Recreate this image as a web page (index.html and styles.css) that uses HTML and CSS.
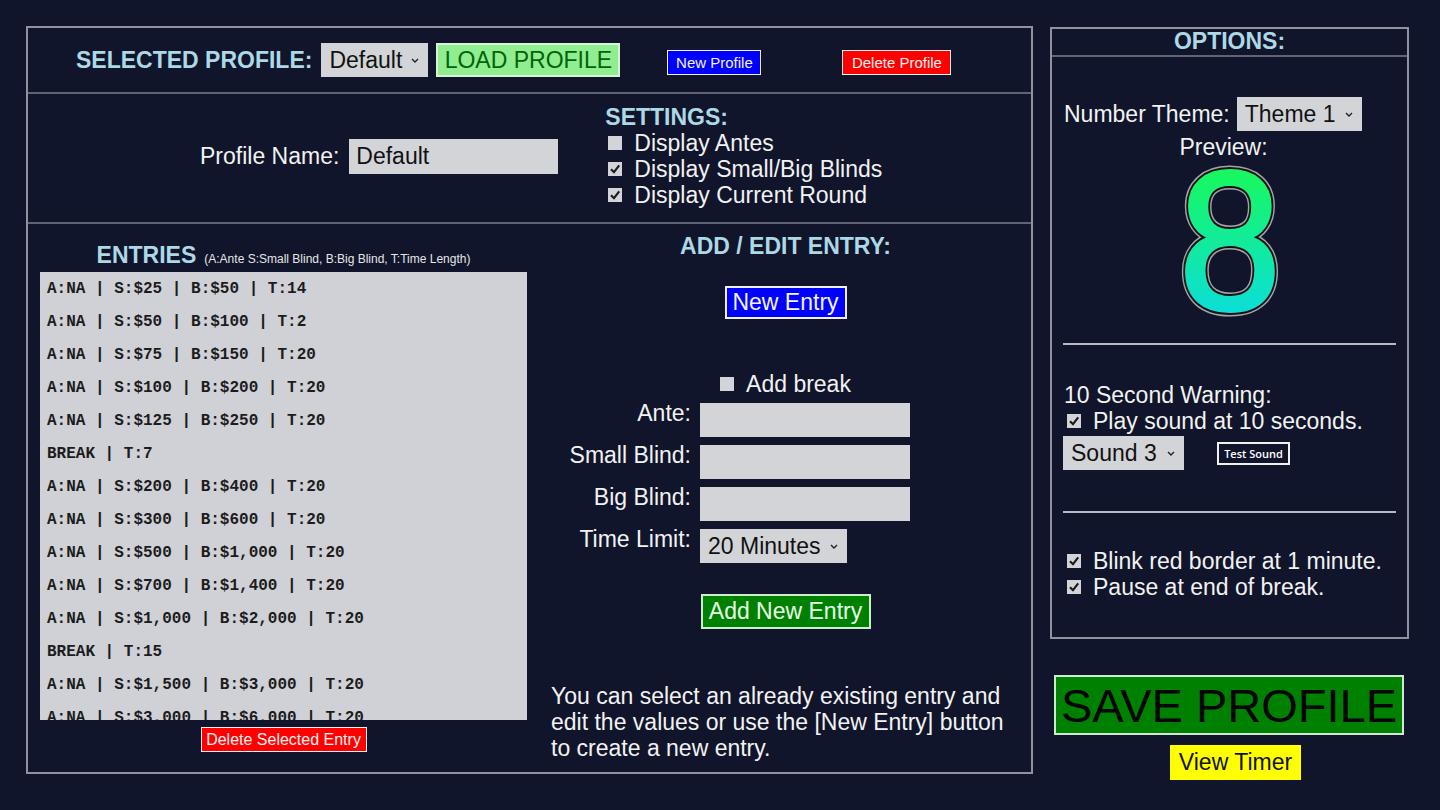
FILE: index.html
```html
<!DOCTYPE html>
<html lang="en">
<head>
    <meta charset="UTF-8">
    <meta name="viewport" content="width=device-width, initial-scale=1.0">
    <title>Blind Timer - Profile Editor</title>
    <link rel="stylesheet" href="styles.css">
</head>
<body>
    <div class="app">
        <main class="editor">
            <!-- profile picker -->
            <section class="profile-bar">
                <span class="heading">SELECTED PROFILE:</span>
                <div class="select select-profile">
                    <select><option>Default</option></select>
                    <svg class="chevron" width="8" height="5" viewBox="0 0 8 5"><path d="M1 1 L4 4 L7 1" /></svg>
                </div>
                <button class="btn btn-load">LOAD PROFILE</button>
                <button class="btn btn-small btn-blue btn-new-profile">New Profile</button>
                <button class="btn btn-small btn-red btn-delete-profile">Delete Profile</button>
            </section>

            <!-- name + display settings -->
            <section class="profile-settings">
                <div class="name-group">
                    <label for="profile-name">Profile Name:</label>
                    <input type="text" id="profile-name" class="field field-name" value="Default">
                </div>
                <div class="settings">
                    <div class="heading">SETTINGS:</div>
                    <label class="check-row"><span class="box"></span>Display Antes</label>
                    <label class="check-row"><span class="box"><svg viewBox="0 0 14 14"><path d="M3 7.2 L6 10.2 L11.2 3.4" /></svg></span>Display Small/Big Blinds</label>
                    <label class="check-row"><span class="box"><svg viewBox="0 0 14 14"><path d="M3 7.2 L6 10.2 L11.2 3.4" /></svg></span>Display Current Round</label>
                </div>
            </section>

            <section class="entries-area">
                <div class="entries">
                    <div class="entries-title">
                        <span class="heading">ENTRIES</span>
                        <span class="legend">(A:Ante S:Small Blind, B:Big Blind, T:Time Length)</span>
                    </div>
                    <ul class="entry-list">
                        <li>A:NA | S:$25 | B:$50 | T:14</li>
                        <li>A:NA | S:$50 | B:$100 | T:2</li>
                        <li>A:NA | S:$75 | B:$150 | T:20</li>
                        <li>A:NA | S:$100 | B:$200 | T:20</li>
                        <li>A:NA | S:$125 | B:$250 | T:20</li>
                        <li>BREAK | T:7</li>
                        <li>A:NA | S:$200 | B:$400 | T:20</li>
                        <li>A:NA | S:$300 | B:$600 | T:20</li>
                        <li>A:NA | S:$500 | B:$1,000 | T:20</li>
                        <li>A:NA | S:$700 | B:$1,400 | T:20</li>
                        <li>A:NA | S:$1,000 | B:$2,000 | T:20</li>
                        <li>BREAK | T:15</li>
                        <li>A:NA | S:$1,500 | B:$3,000 | T:20</li>
                        <li>A:NA | S:$3,000 | B:$6,000 | T:20</li>
                    </ul>
                    <button class="btn btn-small btn-red btn-delete-entry">Delete Selected Entry</button>
                </div>

                <div class="entry-form">
                    <div class="heading">ADD / EDIT ENTRY:</div>
                    <button class="btn btn-blue btn-new-entry">New Entry</button>
                    <label class="check-row break-row"><span class="box"></span>Add break</label>
                    <div class="form-grid">
                        <label for="ante">Ante:</label>
                        <input type="text" id="ante" class="field">
                        <label for="small-blind">Small Blind:</label>
                        <input type="text" id="small-blind" class="field">
                        <label for="big-blind">Big Blind:</label>
                        <input type="text" id="big-blind" class="field">
                        <label>Time Limit:</label>
                        <div class="select select-time">
                            <select><option>20 Minutes</option></select>
                            <svg class="chevron" width="8" height="5" viewBox="0 0 8 5"><path d="M1 1 L4 4 L7 1" /></svg>
                        </div>
                    </div>
                    <button class="btn btn-add-entry">Add New Entry</button>
                    <p class="hint">You can select an already existing entry and edit the values or use the [New Entry] button to create a new entry.</p>
                </div>
            </section>
        </main>

        <aside class="side">
            <div class="options">
                <div class="options-head heading">OPTIONS:</div>
                <div class="options-body">
                    <div class="theme-row">
                        <span>Number Theme:</span>
                        <div class="select select-theme">
                            <select><option>Theme 1</option></select>
                            <svg class="chevron" width="8" height="5" viewBox="0 0 8 5"><path d="M1 1 L4 4 L7 1" /></svg>
                        </div>
                    </div>
                    <div class="preview-label">Preview:</div>
                    <!-- digit preview: one glyph drawn three times for ring, edge and gradient face -->
                    <svg class="preview-digit" width="120" height="160" viewBox="0 0 120 160">
                        <defs>
                            <linearGradient id="digit-fill" x1="0" y1="0" x2="0" y2="1">
                                <stop offset="0" stop-color="#1cff3c" />
                                <stop offset="1" stop-color="#08d8f8" />
                            </linearGradient>
                            <text id="digit-glyph" class="digit" x="0" y="148.5">8</text>
                        </defs>
                        <g transform="translate(60 0) scale(0.93 1)">
                            <use href="#digit-glyph" class="digit-ring" />
                            <use href="#digit-glyph" class="digit-edge" />
                            <use href="#digit-glyph" class="digit-face" />
                        </g>
                    </svg>
                    <hr class="rule">
                    <div class="warning">
                        <div>10 Second Warning:</div>
                        <label class="check-row"><span class="box"><svg viewBox="0 0 14 14"><path d="M3 7.2 L6 10.2 L11.2 3.4" /></svg></span>Play sound at 10 seconds.</label>
                        <div class="sound-row">
                            <div class="select select-sound">
                                <select><option>Sound 3</option></select>
                                <svg class="chevron" width="8" height="5" viewBox="0 0 8 5"><path d="M1 1 L4 4 L7 1" /></svg>
                            </div>
                            <button class="btn btn-test">Test Sound</button>
                        </div>
                    </div>
                    <hr class="rule rule-second">
                    <div class="extras">
                        <label class="check-row"><span class="box"><svg viewBox="0 0 14 14"><path d="M3 7.2 L6 10.2 L11.2 3.4" /></svg></span>Blink red border at 1 minute.</label>
                        <label class="check-row"><span class="box"><svg viewBox="0 0 14 14"><path d="M3 7.2 L6 10.2 L11.2 3.4" /></svg></span>Pause at end of break.</label>
                    </div>
                </div>
            </div>
            <button class="btn btn-save">SAVE PROFILE</button>
            <button class="btn btn-timer">View Timer</button>
        </aside>
    </div>
</body>
</html>
```

FILE: styles.css
```css
body {
    font-family: "Liberation Sans", Arial, sans-serif;
    font-size: 23px;
    background-color: #10152b;
    color: #f2f2f2;
    margin: 0;
    padding: 0;
    width: 1440px;
    height: 810px;
    overflow: hidden;
}
.app {
    display: flex;
    align-items: flex-start;
    gap: 17px;
    padding: 26px 0 0 26px;
}
.heading {
    font-weight: bold;
    color: #add8e6;
    line-height: 26px;
}

/* form controls */
.btn {
    font-family: "Liberation Sans", Arial, sans-serif;
    font-size: 23px;
    border: 2px solid #f0f0f0;
    padding: 0;
    cursor: pointer;
    box-sizing: border-box;
    line-height: 1;
}
.btn-small {
    font-size: 15px;
    height: 25px;
    border-width: 1.5px;
}
.btn-blue {
    background-color: #0000ff;
    color: #f4f4ff;
}
.btn-red {
    background-color: #ff0000;
    color: #fff4f4;
}
.field {
    background-color: #d3d4d8;
    border: none;
    height: 34px;
    font-family: "Liberation Sans", Arial, sans-serif;
    font-size: 23px;
    color: #111;
    padding: 0 7px;
    box-sizing: border-box;
}
.select {
    display: inline-flex;
    align-items: center;
    background-color: #d3d4d8;
    height: 34px;
    box-sizing: border-box;
    padding-right: 9px;
}
.select select {
    appearance: none;
    -webkit-appearance: none;
    background: transparent;
    border: none;
    font-family: "Liberation Sans", Arial, sans-serif;
    font-size: 23px;
    color: #111;
    padding: 0 0 0 8px;
    flex: 1;
    min-width: 0;
    height: 100%;
}
.chevron {
    fill: none;
    stroke: #222;
    stroke-width: 1.4;
    flex: none;
}
.check-row {
    display: flex;
    align-items: center;
    line-height: 26px;
    padding-left: 3px;
}
.box {
    width: 14px;
    height: 14px;
    background-color: #d3d4d8;
    margin-right: 12px;
    flex: none;
    display: flex;
}
.box svg {
    width: 14px;
    height: 14px;
    fill: none;
    stroke: #1c1c1c;
    stroke-width: 2.2;
}

/* left editor panel */
.editor {
    width: 1007px;
    height: 748px;
    border: 2px solid #8f939f;
    box-sizing: border-box;
    display: flex;
    flex-direction: column;
}
.profile-bar {
    height: 64px;
    display: flex;
    align-items: center;
    padding-left: 48px;
    border-bottom: 2px solid #5f6474;
    flex: none;
}
.select-profile {
    width: 107px;
    margin-left: 9px;
}
.btn-load {
    margin-left: 8px;
    width: 184px;
    height: 34px;
    background-color: #90ee90;
    color: #00640a;
    border-color: #d6f3d6;
}
.btn-new-profile {
    margin-left: 47px;
    margin-top: 5px;
    width: 94px;
}
.btn-delete-profile {
    margin-left: 81px;
    margin-top: 5px;
    width: 109px;
}
.profile-settings {
    height: 128px;
    display: flex;
    align-items: flex-start;
    padding-left: 172px;
    border-bottom: 2px solid #5f6474;
    flex: none;
}
.name-group {
    display: flex;
    align-items: center;
    gap: 10px;
    margin-top: 45px;
}
.field-name {
    width: 209px;
    height: 35px;
}
.settings {
    margin-left: 47px;
    margin-top: 10px;
}

/* entries list + entry form */
.entries-area {
    flex: 1;
    display: flex;
}
.entries {
    width: 512px;
    padding: 18px 13px 0 12px;
    box-sizing: border-box;
    display: flex;
    flex-direction: column;
}
.entries-title {
    display: flex;
    align-items: baseline;
    justify-content: center;
    gap: 8px;
    margin-bottom: 4px;
}
.legend {
    font-size: 12px;
    color: #e6e6e6;
}
.entry-list {
    list-style: none;
    margin: 0;
    padding: 0;
    height: 448px;
    overflow: hidden;
    background-color: #cfd1d7;
}
.entry-list li {
    font-family: "Liberation Mono", "Courier New", monospace;
    font-weight: bold;
    font-size: 16px;
    line-height: 33px;
    padding: 1px 0 0 7px;
    height: 33px;
    box-sizing: border-box;
    color: #1c1c1c;
}
.btn-delete-entry {
    align-self: center;
    margin-top: 7px;
    width: 166px;
    font-size: 16px;
}
.entry-form {
    flex: 1;
    display: flex;
    flex-direction: column;
    align-items: center;
    padding-top: 9px;
}
.btn-new-entry {
    margin-top: 27px;
    width: 122px;
    height: 33px;
}
.break-row {
    margin-top: 52px;
    padding-left: 0;
}
.form-grid {
    align-self: stretch;
    display: grid;
    grid-template-columns: 151px 210px;
    column-gap: 9px;
    row-gap: 8px;
    margin-top: 6px;
}
.form-grid label {
    text-align: right;
    line-height: 20px;
}
.form-grid .field {
    width: 210px;
}
.select-time {
    width: 147px;
}
.btn-add-entry {
    margin-top: 31px;
    width: 170px;
    height: 35px;
    background-color: #008000;
    color: #e8ffe8;
    border-color: #cdeecd;
}
.hint {
    align-self: flex-start;
    width: 465px;
    margin: 54px 0 0 11px;
    line-height: 26px;
}

/* right options column */
.side {
    width: 359px;
    display: flex;
    flex-direction: column;
    align-items: flex-start;
    margin-top: 1px;
}
.options {
    width: 359px;
    height: 612px;
    border: 2px solid #8f939f;
    box-sizing: border-box;
}
.options-head {
    text-align: center;
    line-height: 24px;
    padding-bottom: 2px;
    border-bottom: 2px solid #5f6474;
}
.options-body {
    padding: 0 11px;
}
.theme-row {
    display: flex;
    align-items: center;
    gap: 7px;
    margin-top: 40px;
    padding-left: 1px;
}
.select-theme {
    width: 125px;
}
.preview-label {
    text-align: center;
    line-height: 26px;
    margin-top: 3px;
    padding-right: 12px;
}
.preview-digit {
    display: block;
    margin: 0 auto;
}
.digit {
    font-family: "Liberation Sans", Arial, sans-serif;
    font-size: 197px;
    text-anchor: middle;
}
.digit-ring {
    fill: none;
    stroke: #a4a4ac;
    stroke-width: 11;
    stroke-linejoin: round;
}
.digit-edge {
    fill: none;
    stroke: #111;
    stroke-width: 8;
    stroke-linejoin: round;
}
.digit-face {
    fill: url(#digit-fill);
    stroke: url(#digit-fill);
    stroke-width: 4;
    stroke-linejoin: round;
}
.rule {
    border: none;
    height: 2px;
    background-color: #b6bac6;
    margin: 23px 0 0;
}
.warning {
    margin-top: 37px;
    line-height: 26px;
    padding-left: 1px;
}
.sound-row {
    display: flex;
    align-items: center;
    margin-top: 2px;
}
.select-sound {
    width: 121px;
    margin-left: -1px;
}
.btn-test {
    margin-left: 33px;
    width: 73px;
    height: 23px;
    background: transparent;
    color: #fff;
    font-family: "Open Sans", sans-serif;
    font-weight: 600;
    font-size: 11px;
}
.rule-second {
    margin-top: 41px;
}
.extras {
    margin-top: 35px;
    padding-left: 1px;
}
.btn-save {
    margin: 36px 0 0 4px;
    width: 350px;
    height: 60px;
    font-size: 47px;
    background-color: #008000;
    color: #050505;
    border-color: #cfe8cf;
}
.btn-timer {
    margin: 10px 0 0 120px;
    width: 131px;
    height: 35px;
    background-color: #ffff00;
    color: #111;
    border: none;
}
```
